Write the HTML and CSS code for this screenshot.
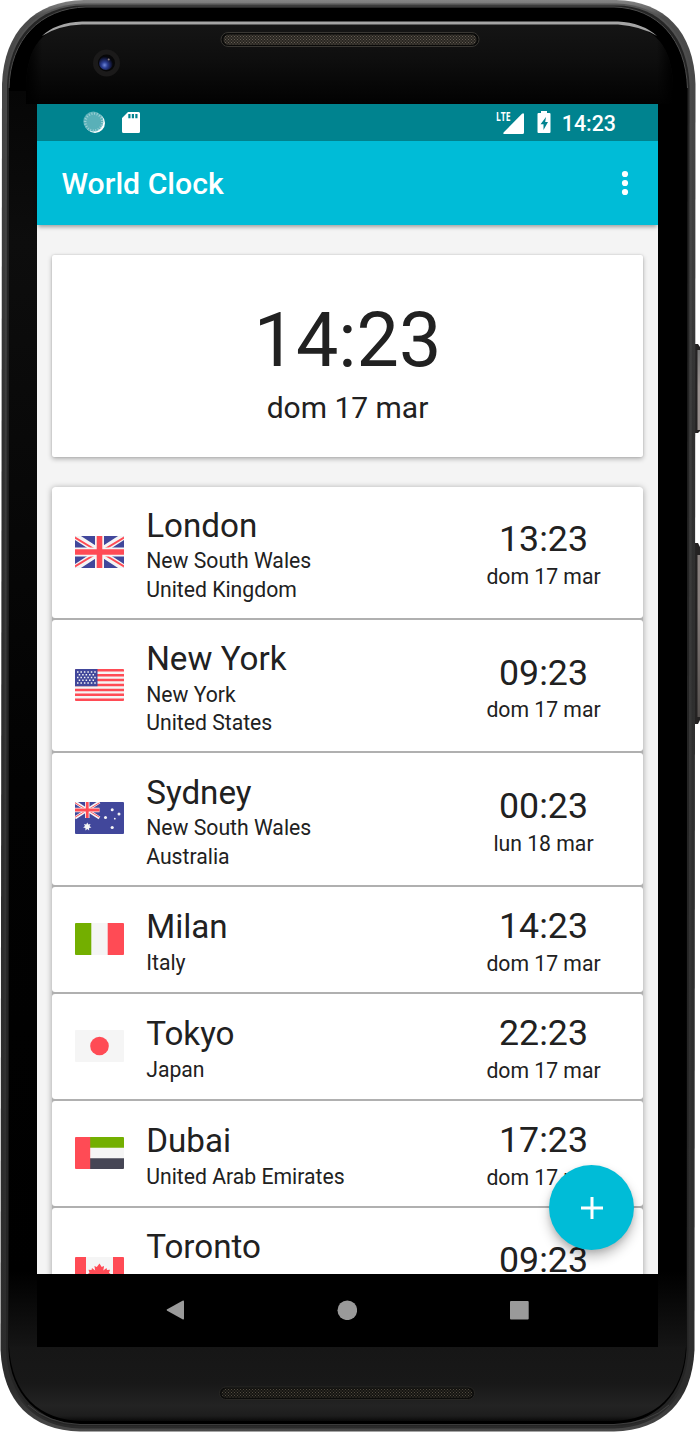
FILE: index.html
```
<!DOCTYPE html>
<html lang="it">
<head>
<meta charset="utf-8">
<title>World Clock</title>
<link rel="stylesheet" href="styles.css">
</head>
<body>
<div class="device">
  <svg class="frame" viewBox="0 0 700 1433" aria-hidden="true">
    <defs>
      <linearGradient id="metal" x1="0" x2="0" y1="0" y2="1"><stop offset="0" stop-color="#858585"/><stop offset=".012" stop-color="#4c4c4c"/><stop offset=".3" stop-color="#303030"/><stop offset=".97" stop-color="#2c2c2c"/><stop offset="1" stop-color="#4a4a4a"/></linearGradient>
      <linearGradient id="band" x1="0" x2="0" y1="0" y2="1"><stop offset="0" stop-color="#555"/><stop offset=".06" stop-color="#484848"/><stop offset=".3" stop-color="#3c3c3c"/><stop offset="1" stop-color="#2b2b2b"/></linearGradient>
      <linearGradient id="topFace" x1="0" x2="0" y1="0" y2="1"><stop offset="0" stop-color="#151515"/><stop offset=".45" stop-color="#0e0e0e"/><stop offset="1" stop-color="#020202"/></linearGradient>
      <linearGradient id="edgeFade" x1="0" x2="1" y1="0" y2="0"><stop offset="0" stop-color="#000"/><stop offset=".025" stop-color="#000" stop-opacity="0"/><stop offset=".975" stop-color="#000" stop-opacity="0"/><stop offset="1" stop-color="#000"/></linearGradient>
      <linearGradient id="bottomFace" x1="0" x2="0" y1="0" y2="1"><stop offset="0" stop-color="#161616"/><stop offset=".5" stop-color="#181818"/><stop offset=".8" stop-color="#232323"/><stop offset=".93" stop-color="#1d1d1d"/><stop offset="1" stop-color="#0a0a0a"/></linearGradient>
      <linearGradient id="leftFace" x1="0" x2="0" y1="0" y2="1"><stop offset="0" stop-color="#060606"/><stop offset=".12" stop-color="#0d0d0d"/><stop offset=".55" stop-color="#020202"/><stop offset=".94" stop-color="#000"/><stop offset="1" stop-color="#151515"/></linearGradient>
      <linearGradient id="rightFace" x1="0" x2="0" y1="0" y2="1"><stop offset="0" stop-color="#000"/><stop offset=".94" stop-color="#000"/><stop offset="1" stop-color="#151515"/></linearGradient>
      <linearGradient id="key" x1="0" x2="0" y1="0" y2="1"><stop offset="0" stop-color="#777"/><stop offset=".1" stop-color="#9a9290"/><stop offset=".7" stop-color="#857d7b"/><stop offset="1" stop-color="#55504e"/></linearGradient>
      <pattern id="mesh" width="3" height="3" patternUnits="userSpaceOnUse"><rect width="3" height="3" fill="#292621"/><path d="M0 0h1v1H0zM1.5 1.5h1v1h-1z" fill="#645d54"/></pattern>
      <pattern id="meshDark" width="3" height="3" patternUnits="userSpaceOnUse"><rect width="3" height="3" fill="#151411"/><path d="M0 0h1v1H0zM1.5 1.5h1v1h-1z" fill="#514b40"/></pattern>
      <radialGradient id="lens" cx=".4" cy=".65" r=".6"><stop offset="0" stop-color="#6d86d8"/><stop offset=".35" stop-color="#2c3f94"/><stop offset=".75" stop-color="#141a43"/><stop offset="1" stop-color="#06070d"/></radialGradient>
    </defs>
    <path d="M695 344h3l2 3v84l-2 2h-3zM695 543h3l2 4v173l-2 4h-3z" fill="#242222"/>
    <path d="M697.5 350h2.5v80h-2.5zM697.5 555h2.5v162h-2.5z" fill="url(#key)"/>
    <path d="M2 84C4 32 34 1 84 0H616C665 1 694 32 695.500 84L694.500 1350C692 1402 663 1430 614 1431.500H80C31 1430 3 1402 .5 1350Z" fill="url(#metal)"/>
    <path d="M5 86C7 36 37 4 84 3.500H616C661 4 690 36 692 86L691 1350C688 1399 660 1427 614 1428.500H80C35 1427 7 1399 4 1350Z" fill="url(#band)"/>
    <path d="M7 86C8.500 37 38 5.500 84 5.500H616C660 5.500 688 37 689.500 86L688.500 1350C686 1397 658 1425 614 1426H80C37 1425 8 1397 6 1350Z" fill="#252525"/>
    <path d="M9 88C10 40 40 8 86 7H614C658 8 686 40 687.500 88L686.500 1350C684 1394 656 1423.500 612 1424.500H82C39 1423.500 10 1394 8.500 1350Z" fill="#000"/>
    <path d="M9 88C10 40 40 8 86 7H614C658 8 686 40 687.500 88" fill="none" stroke="#4c4c4c"/>
    <rect x="9" y="91" width="28" height="1256" fill="url(#leftFace)"/>
    <rect x="658" y="91" width="28.500" height="1256" fill="url(#rightFace)"/>
    <path d="M26 91C26 46 42 25 82 24H616C656 25 673 46 673 91V104H26Z" fill="url(#topFace)"/>
    <path d="M26 91C26 46 42 25 82 24H616C656 25 673 46 673 91V104H26Z" fill="url(#edgeFade)"/>
    <path d="M42 36Q56 22.500 82 21.500H618Q642 22.500 657 36Q642 26.500 618 24.500H82Q58 25.500 42 36Z" fill="#a5a5a5"/>
    <path d="M9 1346.500H686C683 1395 656 1420 612 1421H82C39 1420 12 1395 9 1346.500Z" fill="url(#bottomFace)"/>
    <path d="M28 1405Q48 1423 80 1424.500H614Q650 1423 669 1405" fill="none" stroke="#484848" stroke-width=".8"/>
    <rect x="221" y="32.500" width="258" height="14" rx="7" fill="#0a0a09" stroke="#393733"/>
    <rect x="223.500" y="34.500" width="253" height="10.500" rx="5" fill="url(#mesh)"/>
    <rect x="219.500" y="1387" width="255" height="12.500" rx="6.200" fill="#0b0b0a" stroke="#292825"/>
    <rect x="221.500" y="1388.500" width="251" height="9.500" rx="4.700" fill="url(#meshDark)"/>
    <circle cx="106.500" cy="63" r="13.500" fill="#1b1a1a"/><circle cx="106.500" cy="63" r="8.500" fill="#070708"/><circle cx="106" cy="63" r="7" fill="url(#lens)"/><circle cx="108.700" cy="59.500" r="1" fill="#887b7b"/>
  </svg>

  <main class="screen">
    <div class="status-bar">
      <svg class="status-left" viewBox="0 0 60 24">
        <circle cx="12" cy="12" r="10" fill="#fff"/><circle cx="10.300" cy="10.600" r="10" fill="#59b0b8"/>
        <circle cx="10.800" cy="11.100" r="8.500" fill="none" stroke="#9ed0d5" stroke-width="2.400" stroke-dasharray="1 1.670"/>
        <path d="M45 1H55.500Q57 1 57 2.500V20.500Q57 22 55.500 22H40.500Q39 22 39 20.500V7ZM45.300 3v4.300h2.200V3zm3.500 0v4.300h2.200V3zm3.500 0v4.300h2.200V3z" fill="#fff" fill-rule="evenodd"/>
      </svg>
      <div class="status-right">
        <span class="network"><span class="lte">LTE</span><svg class="signal" viewBox="0 0 21 21"><path d="M21 1V19.500Q21 21 19.500 21H1Q-.5 20.500 1 19L19 .7Q20.500-.5 21 1Z" fill="#fff"/></svg></span>
        <svg class="battery" viewBox="0 0 14 22"><path d="M4 0h6v2h2.500Q13.500 2 13.500 3v18q0 1-1 1h-11q-1 0-1-1V3q0-1 1-1H4ZM9 6 3.500 13.300H6.500V19L11 11H8.200Z" fill="#fff" fill-rule="evenodd"/></svg>
        <span class="status-time">14:23</span>
      </div>
    </div>
    <header class="app-bar">
      <h1>World Clock</h1>
      <svg class="more" viewBox="0 0 8 26"><circle cx="4" cy="4" r="3.100"/><circle cx="4" cy="13" r="3.100"/><circle cx="4" cy="22" r="3.100"/></svg>
    </header>
    <div class="content">
      <section class="hero"><div class="hero-time">14:23</div><div class="hero-date">dom 17 mar</div></section>
      <section class="list">
        <article class="row tall">
          <svg class="flag" viewBox="0 0 49 32"><defs><g id="union"><path d="M0 0h49v32H0z" fill="#41479b"/><path d="M0 0 49 32M49 0 0 32" stroke="#f5f5f5" stroke-width="6.500"/><path d="M0 1.500 19 13M49 1.500 30 13M0 30.500 19 19M49 30.500 30 19" stroke="#ff4b55" stroke-width="2"/><path d="M24.500 0v32M0 16h49" stroke="#f5f5f5" stroke-width="9"/><path d="M24.500 0v32M0 16h49" stroke="#ff4b55" stroke-width="5.600"/></g></defs><use href="#union"/></svg>
          <div class="place"><h2>London</h2><p>New South Wales</p><p>United Kingdom</p></div>
          <div class="clock"><div class="time">13:23</div><div class="date">dom 17 mar</div></div>
        </article>
        <article class="row tall">
          <svg class="flag" viewBox="0 0 49 32"><path d="M0 0h49v32H0z" fill="#f5f5f5"/><path d="M0 1.230h49M0 6.150h49M0 11.070h49M0 16h49M0 20.920h49M0 25.840h49M0 30.770h49" stroke="#ff4b55" stroke-width="2.460"/><path d="M0 0h22.500v17.230H0z" fill="#41479b"/><path d="M2 3h19M2 8.500h19M2 14h19" stroke="#f5f5f5" stroke-width="1.500" stroke-dasharray="1.500 1.950"/><path d="M3.700 5.750h17M3.700 11.250h17" stroke="#f5f5f5" stroke-width="1.500" stroke-dasharray="1.500 1.950"/></svg>
          <div class="place"><h2>New York</h2><p>New York</p><p>United States</p></div>
          <div class="clock"><div class="time">09:23</div><div class="date">dom 17 mar</div></div>
        </article>
        <article class="row tall">
          <svg class="flag" viewBox="0 0 49 32"><path d="M0 0h49v32H0z" fill="#41479b"/><use href="#union" transform="scale(.5)"/><g fill="#f5f5f5"><path d="m12.300 20.500 1 2.100 2.300-.5-1.100 2 1.900 1.500-2.300.5v2.400l-1.800-1.500-1.900 1.500v-2.400l-2.300-.5L10 24.100l-1.100-2 2.300.5z"/><circle cx="30.500" cy="15.500" r="1.500"/><circle cx="37.200" cy="7.700" r="1.500"/><circle cx="44" cy="12" r="1.500"/><circle cx="39.800" cy="16.700" r=".9"/><circle cx="37.200" cy="25.500" r="1.600"/></g></svg>
          <div class="place"><h2>Sydney</h2><p>New South Wales</p><p>Australia</p></div>
          <div class="clock"><div class="time">00:23</div><div class="date">lun 18 mar</div></div>
        </article>
        <article class="row">
          <svg class="flag" viewBox="0 0 49 32"><path d="M0 0h49v32H0z" fill="#f5f5f5"/><path d="M0 0h16.300v32H0z" fill="#73af00"/><path d="M32.700 0H49v32H32.700z" fill="#ff4b55"/></svg>
          <div class="place"><h2>Milan</h2><p>Italy</p></div>
          <div class="clock"><div class="time">14:23</div><div class="date">dom 17 mar</div></div>
        </article>
        <article class="row">
          <svg class="flag" viewBox="0 0 49 32"><path d="M0 0h49v32H0z" fill="#f5f5f5"/><circle cx="24.500" cy="16" r="9.300" fill="#ff4b55"/></svg>
          <div class="place"><h2>Tokyo</h2><p>Japan</p></div>
          <div class="clock"><div class="time">22:23</div><div class="date">dom 17 mar</div></div>
        </article>
        <article class="row">
          <svg class="flag" viewBox="0 0 49 32"><path d="M0 0h49v32H0z" fill="#f5f5f5"/><path d="M15 0h34v10.700H15z" fill="#73af00"/><path d="M15 21.300h34V32H15z" fill="#464655"/><path d="M0 0h15.200v32H0z" fill="#ff4b55"/></svg>
          <div class="place"><h2>Dubai</h2><p>United Arab Emirates</p></div>
          <div class="clock"><div class="time">17:23</div><div class="date">dom 17 mar</div></div>
        </article>
        <article class="row tall">
          <svg class="flag" viewBox="0 0 49 32"><path d="M0 0h49v32H0z" fill="#f5f5f5"/><path d="M0 0h11v32H0zM38 0h11v32H38z" fill="#ff4b55"/><path d="m24.500 6.500 2.200 3.500 2.400-1-.8 4.600 3.200-2.500.5 2 3-.3-1 3 1.700 1.200-7.200 5 .5 1.700-4.500-.7V27h-1v-4l-4.500.7.500-1.700-6.700-5 1.700-1.200-1-3 3 .3.500-2 3.200 2.500-.8-4.600 2.400 1z" fill="#ff4b55"/></svg>
          <div class="place"><h2>Toronto</h2><p>Ontario</p><p>Canada</p></div>
          <div class="clock"><div class="time">09:23</div><div class="date">dom 17 mar</div></div>
        </article>
      </section>
      <button class="fab" aria-label="Add"><svg viewBox="0 0 22 22"><path d="M11 0v22M0 11h22" stroke="#fff" stroke-width="3"/></svg></button>
    </div>
    <nav class="nav-bar">
      <svg viewBox="0 0 20 20"><path d="M17.500.7Q19-.1 19 1.500v17q0 1.600-1.500.8L2.200 10.700q-1.100-.7 0-1.400z"/></svg>
      <svg viewBox="0 0 20 20"><circle cx="10.300" cy="10.300" r="9.800"/></svg>
      <svg viewBox="0 0 20 20"><rect x="1" y="1" width="18.700" height="18.500" rx="1"/></svg>
    </nav>
  </main>
</div>
</body>
</html>
```
FILE: styles.css
```
* { box-sizing: border-box; }
body { margin: 0; background: #fff; font-family: Roboto, sans-serif; color: #212121; }
h1, h2, p { margin: 0; font-weight: 400; }
svg { display: block; flex: none; }

.device { display: grid; width: 700px; height: 1433px; overflow: hidden; }
.frame { grid-area: 1 / 1; width: 700px; height: 1433px; }
.screen {
  grid-area: 1 / 1;
  display: flex;
  flex-direction: column;
  width: 621px;
  height: 1243px;
  margin: 104px 0 0 37px;
  background: #f4f4f4;
  z-index: 1;
}

.status-bar {
  display: flex;
  justify-content: space-between;
  height: 36.5px;
  padding: 7px 42px 0 46px;
  background: #00838f;
  color: #fff;
}
.status-left { width: 60px; height: 24px; }
.status-right { display: flex; align-items: flex-start; }
.network { display: flex; margin-top: 1px; }
.lte { width: 20px; margin: -1px -13px 0 0; font: 700 13px/11px "Open Sans", sans-serif; transform: scaleX(.66); transform-origin: left; }
.signal { width: 21px; height: 21px; margin-top: 1px; }
.battery { width: 14px; height: 22px; margin: 0 11px 0 13px; }
.status-time { font-size: 21.4px; font-weight: 500; line-height: 26px; }

.app-bar {
  position: relative;
  display: flex;
  align-items: center;
  justify-content: space-between;
  height: 84.5px;
  padding: 0 29px 0 24.5px;
  background: #00bcd7;
  box-shadow: 0 3px 4px -1px rgba(0, 0, 0, .35);
  z-index: 1;
}
.app-bar h1 { color: #fff; font-size: 30.2px; font-weight: 500; line-height: 36px; padding-top: 3px; }
.more { width: 8px; height: 26px; fill: #fff; }

.content { position: relative; height: 1049px; padding: 30px 15px 0; overflow: hidden; }
.hero {
  height: 202px;
  padding-top: 40px;
  background: #fff;
  border-radius: 2px;
  box-shadow: 0 2px 5px rgba(0, 0, 0, .28), 0 0 2px rgba(0, 0, 0, .15);
  text-align: center;
}
.hero-time { font-size: 75.4px; line-height: 90px; }
.hero-date { font-size: 30px; line-height: 46px; }
.list { display: flex; flex-direction: column; gap: 2px; margin-top: 29.5px; background: #b0b0b0; border-radius: 3px; box-shadow: 0 1px 6px rgba(0, 0, 0, .35); }
.row { display: flex; align-items: center; height: 105px; padding-left: 23px; background: #fff; border-radius: 3px; }
.row.tall { height: 131.4px; }
.flag { width: 49px; height: 32px; margin-bottom: 1px; border-radius: 1px; }
.place { flex: 1; padding: 3.8px 0 0 22.2px; }
.place h2 { font-size: 33.2px; line-height: 43.6px; }
.place p { font-size: 21.2px; line-height: 28.5px; }
.clock { width: 199px; padding-top: 4.2px; text-align: center; }
.time { font-size: 35.7px; line-height: 45.6px; }
.date { font-size: 21.2px; line-height: 28.5px; }

.fab {
  position: absolute;
  left: 512px;
  bottom: 24px;
  display: grid;
  place-items: center;
  width: 85px;
  height: 85px;
  padding: 0;
  border: 0;
  border-radius: 50%;
  background: #00bcd7;
  box-shadow: 0 7px 12px rgba(0, 0, 0, .25), 0 2px 5px rgba(0, 0, 0, .1);
}
.fab svg { width: 22px; height: 22px; }

.nav-bar { display: flex; justify-content: space-between; height: 73px; padding: 26px 129px 0 128px; background: #000; }
.nav-bar svg { width: 20px; height: 20px; fill: #9a9a9a; }
```
